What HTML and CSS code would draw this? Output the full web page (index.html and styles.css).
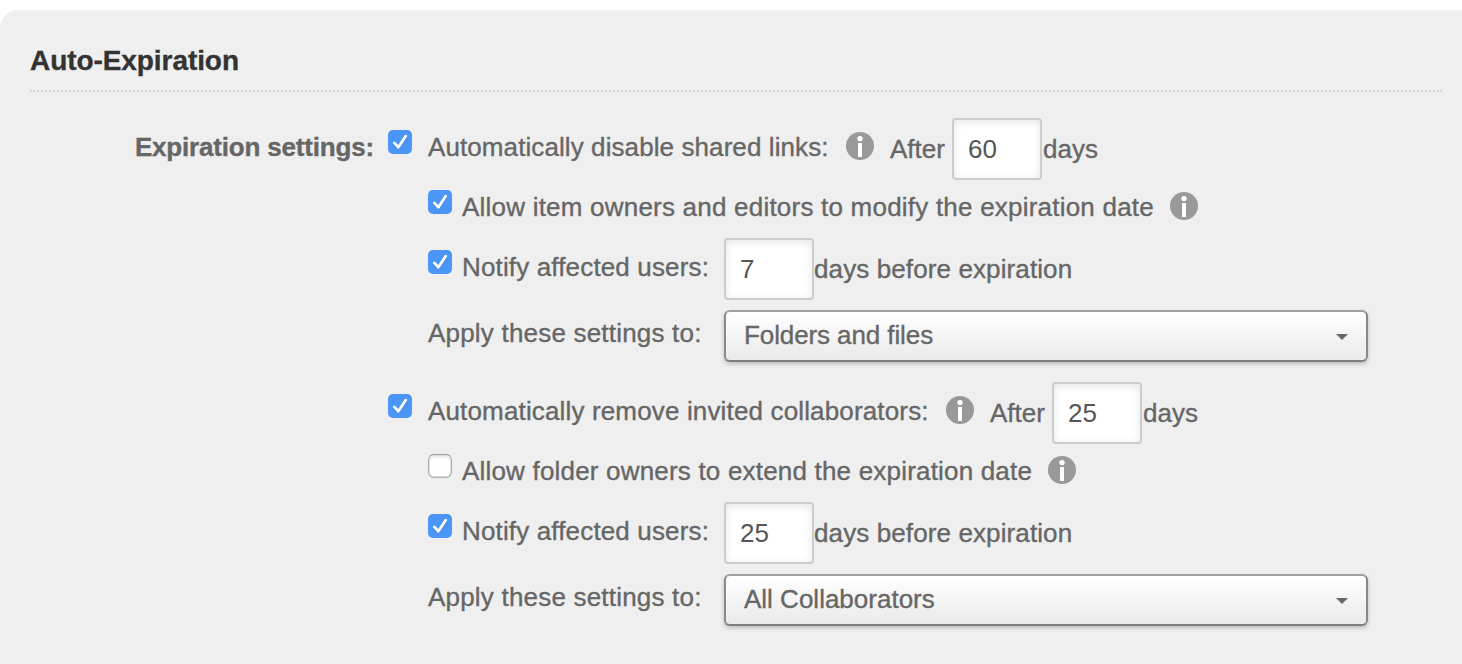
FILE: index.html
```
<!DOCTYPE html>
<html lang="en">
<head>
<meta charset="utf-8">
<title>Auto-Expiration</title>
<link rel="stylesheet" href="styles.css">
</head>
<body>
<svg class="defs" width="0" height="0">
  <symbol id="info" viewBox="0 0 28 28"><circle cx="14" cy="14" r="14" fill="#999"/><circle cx="14" cy="6.6" r="2.7" fill="#fff"/><rect x="12" y="11" width="4" height="14" fill="#fff"/></symbol>
  <symbol id="tick" viewBox="0 0 24 24"><path d="M6.3 14 10.4 18.3 17.6 7.4" fill="none" stroke="#2f76cf" stroke-opacity=".45" stroke-width="2.8" stroke-linecap="round" stroke-linejoin="round"/><path d="M6.3 12.9 10.4 17.2 17.6 6.2" fill="none" stroke="#fff" stroke-width="2.8" stroke-linecap="round" stroke-linejoin="round"/></symbol>
</svg>
<main class="panel">
  <h2 class="title">Auto-Expiration</h2>
  <section class="settings">
    <div class="heading">Expiration settings:</div>
    <div class="rows">
      <div class="row">
        <span class="check on"><svg><use href="#tick"/></svg></span>
        <span class="label main-label links">Automatically disable shared links:</span>
        <svg class="info"><use href="#info"/></svg>
        <span class="text after">After</span>
        <input class="field" type="text" value="60">
        <span class="text days">days</span>
      </div>
      <div class="row sub">
        <span class="check on"><svg><use href="#tick"/></svg></span>
        <span class="label modify">Allow item owners and editors to modify the expiration date</span>
        <svg class="info"><use href="#info"/></svg>
      </div>
      <div class="row sub tall">
        <span class="check on"><svg><use href="#tick"/></svg></span>
        <span class="label notify">Notify affected users:</span>
        <input class="field" type="text" value="7">
        <span class="text before">days before expiration</span>
      </div>
      <div class="row sub tall">
        <span class="apply">Apply these settings to:</span>
        <div class="select"><span class="folders">Folders and files</span><svg class="caret" viewBox="0 0 12 6"><path d="M0 0h12L6 6z" fill="#666"/></svg></div>
      </div>
      <div class="row">
        <span class="check on"><svg><use href="#tick"/></svg></span>
        <span class="label main-label collab">Automatically remove invited collaborators:</span>
        <svg class="info"><use href="#info"/></svg>
        <span class="text after">After</span>
        <input class="field" type="text" value="25">
        <span class="text days">days</span>
      </div>
      <div class="row sub">
        <span class="check"></span>
        <span class="label extend">Allow folder owners to extend the expiration date</span>
        <svg class="info"><use href="#info"/></svg>
      </div>
      <div class="row sub tall">
        <span class="check on"><svg><use href="#tick"/></svg></span>
        <span class="label notify">Notify affected users:</span>
        <input class="field" type="text" value="25">
        <span class="text before">days before expiration</span>
      </div>
      <div class="row sub tall">
        <span class="apply">Apply these settings to:</span>
        <div class="select"><span class="all">All Collaborators</span><svg class="caret" viewBox="0 0 12 6"><path d="M0 0h12L6 6z" fill="#666"/></svg></div>
      </div>
    </div>
  </section>
</main>
</body>
</html>
```
FILE: styles.css
```
* { box-sizing: border-box; }
body {
  margin: 0;
  height: 664px;
  padding-top: 10px;
  overflow: hidden;
  background: #fff;
  color: #666;
  font: 26px/30px "Liberation Sans", Arial, sans-serif;
  -webkit-text-stroke: .35px currentColor;
}
.defs { position: absolute; }
.panel {
  height: 654px;
  padding: 35px 20px 0 30px;
  background: #efefef;
  border-top-left-radius: 18px;
}
.title {
  margin: 0;
  height: 47px;
  border-bottom: 2px dotted #d3d3d3;
  color: #333;
  font-size: 28px;
  line-height: 32px;
  letter-spacing: -.07px;
}
.settings { display: flex; padding-top: 26px; }
.heading {
  width: 344px;
  padding-top: 14px;
  margin-right: 14px;
  text-align: right;
  font-weight: bold;
  letter-spacing: -.18px;
  white-space: nowrap;
}
.rows { width: 1010px; }
.row {
  display: flex;
  align-items: flex-start;
  height: 60px;
  white-space: nowrap;
}
.tall { height: 72px; }
.row:nth-child(4n+3) { height: 72px; }
.sub { padding-left: 40px; }
.check {
  flex: none;
  width: 24px;
  height: 24px;
  margin: 12px 10px 0 0;
  border: 1px solid #b0b0b0;
  border-top-color: #989898;
  border-radius: 6px;
  background: #fff;
  box-shadow: inset 0 0 0 1px #dcdcdc, inset 0 3px 2px #eee;
}
.check.on {
  border: 0;
  border-radius: 5px;
  background: #4b95f7;
  box-shadow: none;
}
.check svg { display: block; width: 24px; height: 24px; }
.label { flex: none; padding-top: 14px; }
.main-label { margin-left: 6px; }
.links { width: 418px; letter-spacing: .09px; }
.collab { width: 518px; letter-spacing: .15px; }
.modify { width: 708px; letter-spacing: .215px; }
.extend { width: 586px; letter-spacing: .19px; }
.notify { width: 262px; letter-spacing: .15px; }
.info { flex: none; width: 28px; height: 28px; margin-top: 14px; }
.text { padding-top: 16px; }
.after { width: 62px; margin-left: 16px; }
.before { letter-spacing: .11px; }
.days { padding-left: 1px; }
.field {
  flex: none;
  width: 90px;
  height: 62px;
  padding: 0 14px;
  border: 2px solid #ccc;
  border-radius: 4px;
  background: #fff;
  box-shadow: inset 0 2px 8px rgba(0, 0, 0, .1);
  color: #555;
  font: inherit;
  -webkit-text-stroke: 0;
  outline: 0;
}
.apply { width: 296px; padding-top: 8px; letter-spacing: .2px; }
.select {
  display: flex;
  justify-content: space-between;
  align-items: flex-start;
  width: 644px;
  height: 52px;
  padding: 8px 18px;
  border: 2px solid #888;
  border-top-color: #a0a0a0;
  border-bottom-color: #7d7d7d;
  border-radius: 6px;
  background: linear-gradient(#fff, #eaeaea);
  background-clip: padding-box;
  box-shadow: 0 2px 4px rgba(0, 0, 0, .22);
}
.folders { letter-spacing: -.1px; }
.caret { width: 12px; height: 6px; margin-top: 14px; }
```
